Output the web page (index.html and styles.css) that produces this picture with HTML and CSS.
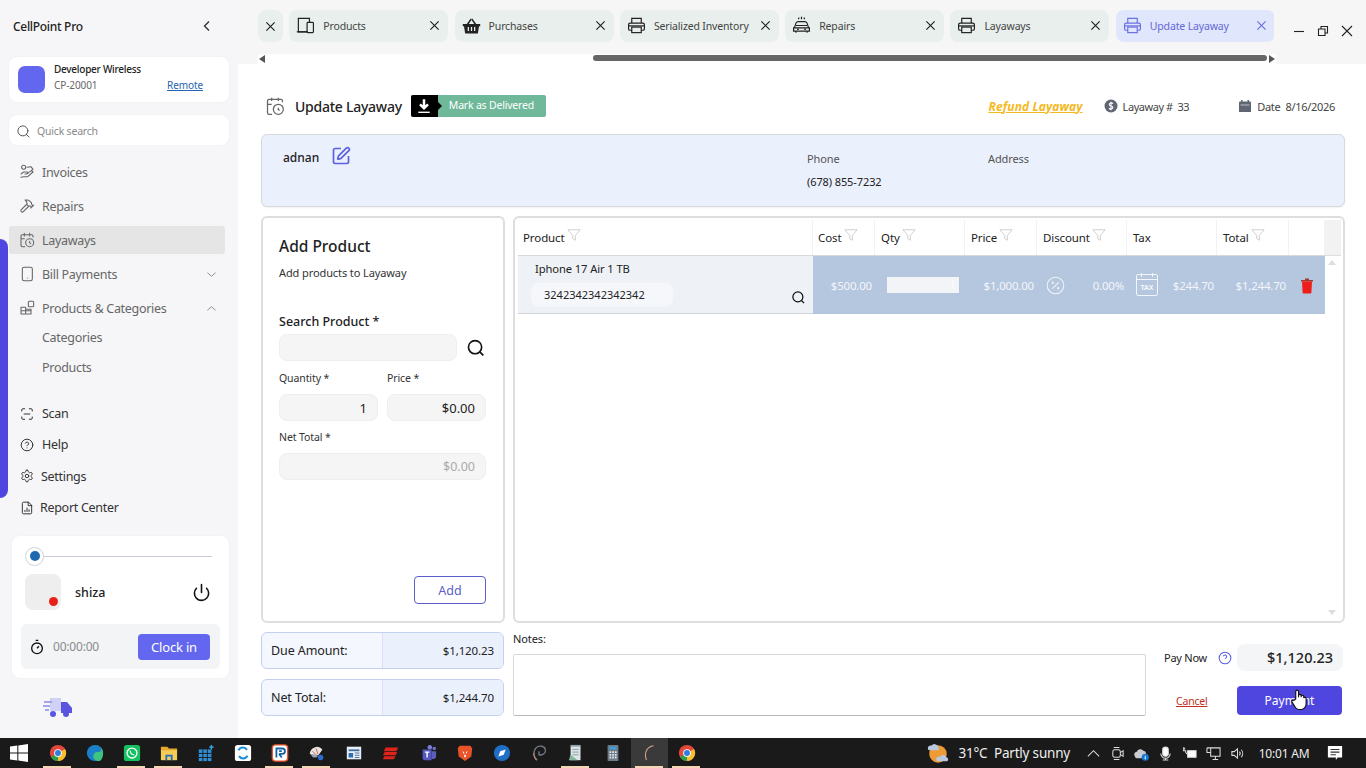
FILE: index.html
```html
<!DOCTYPE html>
<html lang="en">
<head>
  <meta charset="UTF-8">
  <meta name="viewport" content="width=device-width, initial-scale=1.0">
  <title>CellPoint Pro - Update Layaway</title>
  <link rel="stylesheet" href="styles.css">
</head>
<body>
  <!-- Shared icons -->
  <svg class="sprite" aria-hidden="true">
    <symbol id="i-search" viewBox="0 0 24 24"><circle cx="11" cy="11" r="8"/><path d="m21 21-4.3-4.3"/></symbol>
    <symbol id="i-cal-clock" viewBox="0 0 24 24"><path d="M21 7.5V6a2 2 0 0 0-2-2H5a2 2 0 0 0-2 2v14a2 2 0 0 0 2 2h3.5M16 2v4M8 2v4M3 10h5M17.5 17.5 16 16.3V14"/><circle cx="16" cy="16" r="6"/></symbol>
    <symbol id="i-printer" viewBox="0 0 24 24"><path d="M6 9V3h12v6M6 18H4a2 2 0 0 1-2-2v-5a2 2 0 0 1 2-2h16a2 2 0 0 1 2 2v5a2 2 0 0 1-2 2h-2"/><path d="M2 12.500h20"/><rect x="6" y="14" width="12" height="7"/></symbol>
    <symbol id="i-close" viewBox="0 0 12 12"><path d="M1.500 1.500l9 9M10.500 1.500l-9 9"/></symbol>
    <symbol id="i-filter" viewBox="0 0 16 16"><path d="M1 2h14L9.500 8.500V14l-3-2V8.500z"/></symbol>
    <symbol id="i-chev-down" viewBox="0 0 12 12"><path d="M1.500 4l4.500 4 4.500-4"/></symbol>
    <symbol id="i-chrome" viewBox="0 0 20 20"><circle cx="10" cy="10" r="9" fill="#e2483b"/><path d="M10 10 2.200 14.500A9 9 0 0 0 10 19z" fill="#2c9e4b"/><path d="M10 10v9a9 9 0 0 0 7.800-13.500z" fill="#f6c02c"/><circle cx="10" cy="10" r="4.300" fill="#fff"/><circle cx="10" cy="10" r="3.300" fill="#2f7de1"/></symbol>
  </svg>

  <div class="app">
    <aside class="sidebar">
      <div class="brand">
        <span class="brand-name">CellPoint Pro</span>
        <svg class="brand-back" viewBox="0 0 12 12"><path d="M8 1.500 3.500 6 8 10.500"/></svg>
      </div>

      <div class="org-card">
        <div class="org-logo"></div>
        <div class="org-info">
          <div class="org-name">Developer Wireless</div>
          <div class="org-meta"><span>CP-20001</span><a href="#">Remote</a></div>
        </div>
      </div>

      <div class="quick-search">
        <svg class="icon"><use href="#i-search"/></svg>
        <span>Quick search</span>
      </div>

      <nav class="nav">
        <a class="nav-item" href="#">
          <svg class="icon" viewBox="0 0 24 24"><circle cx="7" cy="5" r="3"/><path d="M3 15l4-3h5l2 1.500-3 1.500h-2M14 13l5-3 2 2-8 7H7l-4 1M12 5l6-1 3 4-3 2"/></svg>
          Invoices
        </a>
        <a class="nav-item" href="#">
          <svg class="icon" viewBox="0 0 24 24"><path d="m15 12-8.500 8.500c-.83.83-2.170.83-3 0a2.120 2.120 0 0 1 0-3L12 9M17.640 15 22 10.640M20.910 11.700l-1.250-1.250c-.6-.6-.93-1.400-.93-2.250v-.86L16.010 4.600a5.560 5.560 0 0 0-3.940-1.640H9l.92.82A6.180 6.180 0 0 1 12 8.400v1.560l2 2h2.470l2.260 1.910"/></svg>
          Repairs
        </a>
        <a class="nav-item active" href="#">
          <svg class="icon"><use href="#i-cal-clock"/></svg>
          Layaways
        </a>
        <a class="nav-item" href="#">
          <svg class="icon" viewBox="0 0 24 24"><rect x="5" y="2" width="15" height="20" rx="2.500"/><path d="M12.500 18h.01"/></svg>
          Bill Payments
          <svg class="nav-chev"><use href="#i-chev-down"/></svg>
        </a>
        <a class="nav-item" href="#">
          <svg class="icon" viewBox="0 0 24 24"><path d="M10 11H3v10h15v-7h-8zM10 11v10M3 16h15"/><rect x="14" y="2" width="8" height="8" rx="1.500"/></svg>
          Products &amp; Categories
          <svg class="nav-chev flip"><use href="#i-chev-down"/></svg>
        </a>
        <div class="subnav">
          <a href="#">Categories</a>
          <a href="#">Products</a>
        </div>
      </nav>

      <nav class="nav-tools">
        <a href="#">
          <svg class="icon" viewBox="0 0 24 24"><path d="M3 7V5a2 2 0 0 1 2-2h3M16 3h3a2 2 0 0 1 2 2v2M21 17v2a2 2 0 0 1-2 2h-3M8 21H5a2 2 0 0 1-2-2v-2M7 12h10"/></svg>
          <span class="t-scan">Scan</span>
        </a>
        <a href="#">
          <svg class="icon" viewBox="0 0 24 24"><circle cx="12" cy="12" r="10"/><path d="M9.090 9a3 3 0 0 1 5.830 1c0 2-3 3-3 3M12 17h.01"/></svg>
          <span class="t-scan">Help</span>
        </a>
        <a href="#">
          <svg class="icon" viewBox="0 0 24 24"><path d="M12.220 2h-.44a2 2 0 0 0-2 2v.18a2 2 0 0 1-1 1.730l-.43.25a2 2 0 0 1-2 0l-.15-.08a2 2 0 0 0-2.730.73l-.22.38a2 2 0 0 0 .73 2.730l.15.1a2 2 0 0 1 1 1.720v.51a2 2 0 0 1-1 1.740l-.15.09a2 2 0 0 0-.73 2.730l.22.38a2 2 0 0 0 2.730.73l.15-.08a2 2 0 0 1 2 0l.43.25a2 2 0 0 1 1 1.730V20a2 2 0 0 0 2 2h.44a2 2 0 0 0 2-2v-.18a2 2 0 0 1 1-1.730l.43-.25a2 2 0 0 1 2 0l.15.08a2 2 0 0 0 2.730-.73l.22-.39a2 2 0 0 0-.73-2.730l-.15-.08a2 2 0 0 1-1-1.740v-.5a2 2 0 0 1 1-1.740l.15-.09a2 2 0 0 0 .73-2.730l-.22-.38a2 2 0 0 0-2.730-.73l-.15.08a2 2 0 0 1-2 0l-.43-.25a2 2 0 0 1-1-1.730V4a2 2 0 0 0-2-2z"/><circle cx="12" cy="12" r="3"/></svg>
          <span>Settings</span>
        </a>
        <a href="#">
          <svg class="icon" viewBox="0 0 24 24"><path d="M14 2H6a2 2 0 0 0-2 2v16a2 2 0 0 0 2 2h12a2 2 0 0 0 2-2V8zM14 2v6h6M8.500 18v-2M12 18v-6M15.500 18v-3"/></svg>
          <span class="t-report">Report Center</span>
        </a>
      </nav>

      <div class="user-card">
        <div class="slider"><span class="slider-handle"></span><span class="slider-line"></span></div>
        <div class="user-row">
          <div class="avatar"><span class="avatar-dot"></span></div>
          <span class="user-name">shiza</span>
          <svg class="power" viewBox="0 0 24 24"><path d="M12 2v10M18.400 6.600a9 9 0 1 1-12.770.04"/></svg>
        </div>
        <div class="clock-strip">
          <svg class="timer" viewBox="0 0 24 24"><path d="M10 2h4M12 14l3-3"/><circle cx="12" cy="14" r="8"/></svg>
          <span class="clock-time">00:00:00</span>
          <button class="clock-btn">Clock in</button>
        </div>
      </div>

      <svg class="truck" viewBox="0 0 32 22">
        <path d="M8 2h11v13H8z" fill="#cfd1f7"/>
        <path d="M19 6h6l5 6v5H19z" fill="#5a55e0"/>
        <circle cx="11" cy="18" r="3" fill="#5a55e0"/>
        <circle cx="24" cy="18" r="3" fill="#5a55e0"/>
        <path d="M2 6h8M1 10h7M3 14h4" stroke="#8b88ea" stroke-width="1.500" fill="none"/>
      </svg>
    </aside>
    <div class="sidebar-rail"></div>

    <div class="main">
      <div class="topbar">
        <div class="tabs-row">
          <div class="tabs">
            <div class="tab tab-cut"><svg class="tab-x"><use href="#i-close"/></svg></div>
            <div class="tab">
              <svg class="tab-icon" viewBox="0 0 24 24"><path d="M15 20H3V3h14v5"/><path d="M1 20h13"/><rect x="14" y="8" width="8" height="13" rx="1"/></svg>
              <span class="tab-label">Products</span>
              <svg class="tab-x"><use href="#i-close"/></svg>
            </div>
            <div class="tab">
              <svg class="tab-icon solid" viewBox="0 0 24 24"><path d="M1 10h22v3h-1.500L20 22H4L2.500 13H1z"/><path d="M6 10l5-7 1.500 1-4 6zM18 10l-5-7-1.500 1 4 6z"/><path d="M8 14v5M12 14v5M16 14v5" stroke="#e8efec" stroke-width="1.600"/></svg>
              <span class="tab-label">Purchases</span>
              <svg class="tab-x"><use href="#i-close"/></svg>
            </div>
            <div class="tab">
              <svg class="tab-icon"><use href="#i-printer"/></svg>
              <span class="tab-label">Serialized Inventory</span>
              <svg class="tab-x"><use href="#i-close"/></svg>
            </div>
            <div class="tab">
              <svg class="tab-icon" viewBox="0 0 24 24"><path d="M3 15l2-6c.5-1.500 1.500-2 3-2h8c1.500 0 2.500.5 3 2l2 6M2 15h20v4H2zM5 19v2M19 19v2M5 12h14M8 4l1-2M12 4V1M16 4l-1-2M6.500 17h2M15.500 17h2"/></svg>
              <span class="tab-label">Repairs</span>
              <svg class="tab-x"><use href="#i-close"/></svg>
            </div>
            <div class="tab">
              <svg class="tab-icon"><use href="#i-printer"/></svg>
              <span class="tab-label">Layaways</span>
              <svg class="tab-x"><use href="#i-close"/></svg>
            </div>
            <div class="tab active">
              <svg class="tab-icon"><use href="#i-printer"/></svg>
              <span class="tab-label">Update Layaway</span>
              <svg class="tab-x"><use href="#i-close"/></svg>
            </div>
          </div>
          <div class="win-controls">
            <svg viewBox="0 0 12 12"><path d="M1 6.500h10"/></svg>
            <svg viewBox="0 0 12 12"><path d="M1.500 4h6.500v6.500H1.500zM4 4V1.500h6.500V8H8"/></svg>
            <svg viewBox="0 0 12 12"><path d="M1 1l10 10M11 1 1 11"/></svg>
          </div>
        </div>
        <div class="hscroll">
          <span class="arrow-left"></span>
          <span class="hscroll-track"><span class="hscroll-thumb"></span></span>
          <span class="arrow-right"></span>
        </div>
      </div>

      <main class="content">
        <div class="page-head">
          <svg class="page-icon"><use href="#i-cal-clock"/></svg>
          <h1>Update Layaway</h1>
          <button class="deliver-btn">
            <span class="deliver-icon">
              <svg viewBox="0 0 14 14"><path d="M7 1v7.500M3.500 5.500 7 9l3.500-3.500" stroke="#fff" stroke-width="2.200" fill="none"/><path d="M2 12.500h10" stroke="#fff" stroke-width="1.200"/></svg>
            </span>
            <span class="deliver-text">Mark as Delivered</span>
          </button>
          <a class="refund" href="#">Refund Layaway</a>
          <span class="head-meta meta-no">
            <svg viewBox="0 0 14 14"><circle cx="7" cy="7" r="6.500" fill="#5f6672"/><path d="M9 4.800C8.500 4 6.900 3.800 6 4.300c-1 .6-.9 2 .2 2.400l1.700.6c1.200.5 1.200 1.900.1 2.400-1 .5-2.500.2-3-.6M7 2.800v8.400" stroke="#fff" stroke-width="1.100" fill="none"/></svg>
            Layaway #&nbsp; 33
          </span>
          <span class="head-meta meta-date">
            <svg viewBox="0 0 14 14"><path d="M1 3.500a1 1 0 0 1 1-1h1V1h1.500v1.500h5V1H11v1.500h1a1 1 0 0 1 1 1V13H1z" fill="#5f6672"/><path d="M2.500 5.500h9v1h-9z" fill="#fff" opacity=".6"/></svg>
            Date&nbsp; 8/16/2026
          </span>
        </div>

        <section class="customer">
          <div class="cust-name">
            <span>adnan</span>
            <svg class="cust-edit" viewBox="0 0 24 24"><path d="M12 3H5a2 2 0 0 0-2 2v14a2 2 0 0 0 2 2h14a2 2 0 0 0 2-2v-7"/><path d="M18.375 2.625a1 1 0 0 1 3 3l-9.013 9.014a2 2 0 0 1-.853.505l-2.873.84a.5.5 0 0 1-.62-.62l.84-2.873a2 2 0 0 1 .506-.852z"/></svg>
          </div>
          <div class="cust-col phone">
            <div class="cust-label">Phone</div>
            <div class="cust-value">(678) 855-7232</div>
          </div>
          <div class="cust-col">
            <div class="cust-label">Address</div>
          </div>
        </section>

        <div class="work-row">
          <section class="panel add-panel">
            <h2>Add Product</h2>
            <p class="add-sub">Add products to Layaway</p>
            <label class="search-label">Search Product *</label>
            <div class="search-row">
              <div class="field search-field"></div>
              <svg class="search-go"><use href="#i-search"/></svg>
            </div>
            <div class="field-pair">
              <div>
                <label class="small-label">Quantity *</label>
                <div class="field">1</div>
              </div>
              <div>
                <label class="small-label">Price *</label>
                <div class="field">$0.00</div>
              </div>
            </div>
            <label class="small-label net">Net Total *</label>
            <div class="field muted">$0.00</div>
            <div class="add-actions"><button class="add-btn">Add</button></div>
          </section>

          <section class="panel table-panel">
            <div class="table-wrap">
              <div class="thead">
                <div class="th">Product<svg class="filter"><use href="#i-filter"/></svg></div>
                <div class="th">Cost<svg class="filter"><use href="#i-filter"/></svg></div>
                <div class="th">Qty<svg class="filter"><use href="#i-filter"/></svg></div>
                <div class="th">Price<svg class="filter"><use href="#i-filter"/></svg></div>
                <div class="th">Discount<svg class="filter"><use href="#i-filter"/></svg></div>
                <div class="th">Tax</div>
                <div class="th">Total<svg class="filter"><use href="#i-filter"/></svg></div>
                <div class="th"></div>
              </div>
              <div class="tr">
                <div class="td-product">
                  <div class="prod-name">Iphone 17 Air 1 TB</div>
                  <div class="prod-serial">3242342342342342</div>
                  <svg class="prod-search"><use href="#i-search"/></svg>
                </div>
                <div class="td num">$500.00</div>
                <div class="td"><div class="qty-input">1</div></div>
                <div class="td num">$1,000.00</div>
                <div class="td disc">
                  <svg class="disc-icon" viewBox="0 0 24 24"><circle cx="12" cy="12" r="10.500"/><path d="M16 8l-8 8"/><circle cx="8.500" cy="8.500" r=".8"/><circle cx="15.500" cy="15.500" r=".8"/></svg>
                  <span>0.00%</span>
                </div>
                <div class="td disc">
                  <span class="tax-icon">TAX</span>
                  <span>$244.70</span>
                </div>
                <div class="td num">$1,244.70</div>
                <div class="td">
                  <svg class="trash" viewBox="0 0 14 16"><path d="M1 2.500h12V4H1z" fill="#a33a2c"/><path d="M5 1h4v1.500H5z" fill="#a33a2c"/><path d="M2 4h10l-.6 11a1 1 0 0 1-1 1H3.600a1 1 0 0 1-1-1z" fill="#ee1f1a"/></svg>
                </div>
              </div>
            </div>
            <div class="vscroll">
              <span class="vscroll-head"></span>
              <span class="v-up"></span>
              <span class="v-down"></span>
            </div>
          </section>
        </div>

        <div class="bottom-row">
          <div class="totals">
            <div class="total-box"><span class="total-label">Due Amount:</span><span class="total-value">$1,120.23</span></div>
            <div class="total-box"><span class="total-label">Net Total:</span><span class="total-value">$1,244.70</span></div>
          </div>
          <div class="notes">
            <label>Notes:</label>
            <div class="notes-box"></div>
          </div>
          <div class="pay">
            <div class="pay-row">
              <span class="pay-label">Pay Now</span>
              <svg class="pay-help" viewBox="0 0 24 24"><circle cx="12" cy="12" r="10"/><path d="M9.090 9a3 3 0 0 1 5.830 1c0 2-3 3-3 3M12 17h.01"/></svg>
              <div class="pay-field">$1,120.23</div>
            </div>
            <div class="pay-actions">
              <a class="cancel" href="#">Cancel</a>
              <button class="pay-btn">Payment</button>
            </div>
          </div>
        </div>
      </main>
    </div>
  </div>

  <!-- Mouse pointer caught in the capture -->
  <svg class="cursor" viewBox="0 0 18 24"><path d="M5 11V3a1.500 1.500 0 0 1 3 0v6-1.500a1.400 1.400 0 0 1 2.800 0V9v-1a1.400 1.400 0 0 1 2.700 0v2a1.300 1.300 0 0 1 2.500 0v6c0 3-2 6-5 6H8c-2 0-3-1-4-3l-3-5c-.8-1.500 1-2.500 2-1.500z" fill="#fff" stroke="#111" stroke-width="1.200"/></svg>

  <footer class="taskbar">
    <div class="tb-item start">
      <svg viewBox="0 0 16 16"><path d="M0 2.300 6.500 1.400v6.200H0zM7.400 1.300 16 0v7.600H7.400zM0 8.500h6.500v6.200L0 13.800zM7.400 8.500H16V16l-8.600-1.300z" fill="#fff"/></svg>
    </div>
    <div class="tb-item run"><svg viewBox="0 0 20 20"><use href="#i-chrome"/></svg></div>
    <div class="tb-item">
      <svg viewBox="0 0 20 20"><circle cx="10" cy="10" r="9" fill="#1c7fc9"/><path d="M19 10c0-5-4-9-9-9 4 0 7 2 7 5 0 2-2 3-4 3-3 0-5 2-5 5 0 3 3 5 6 5 3 0 5-4 5-9z" fill="#3fc47f"/></svg>
    </div>
    <div class="tb-item run">
      <svg viewBox="0 0 20 20"><rect x="1" y="1" width="18" height="18" rx="3" fill="#13c25e"/><circle cx="10" cy="10" r="5.500" fill="none" stroke="#fff" stroke-width="1.500"/><path d="M8 7.500c0 2.500 2 4.500 4.500 4.500" fill="none" stroke="#fff" stroke-width="1.500"/></svg>
    </div>
    <div class="tb-item run">
      <svg viewBox="0 0 20 20"><path d="M1 3h7l2 2h9v3H1z" fill="#e8a92c"/><path d="M1 7h18v11H1z" fill="#f6cc58"/><path d="M6 12h8v6h-2v-4H8v4H6z" fill="#1a6fc0"/></svg>
    </div>
    <div class="tb-item">
      <svg viewBox="0 0 20 20"><path d="M2 6h14v13H2z" fill="#2e8fd6"/><path d="M6.500 6v13M11.500 6v13M2 10.500h14M2 15h14" stroke="#1a1a1a" stroke-width="1"/><path d="M16 1v5M13.500 3.500h5" stroke="#3aa8ee" stroke-width="1.600"/></svg>
    </div>
    <div class="tb-item">
      <svg viewBox="0 0 20 20"><rect x="1" y="1" width="18" height="18" rx="3" fill="#fff"/><path d="M14.500 6.500A5.500 5.500 0 0 0 5 7M5.500 13.500A5.500 5.500 0 0 0 15 13" fill="none" stroke="#1a8ed8" stroke-width="2.200"/></svg>
    </div>
    <div class="tb-item run">
      <svg viewBox="0 0 20 20"><rect x="1.500" y="1" width="17" height="18" rx="3.500" fill="#fff" stroke="#e4572e" stroke-width="1.500"/><path d="M6 15V5h6.500a2.500 2.500 0 0 1 0 6H9M9 11l3 4M9 8h3" fill="none" stroke="#1464a8" stroke-width="2"/></svg>
    </div>
    <div class="tb-item run">
      <svg viewBox="0 0 20 20"><path d="M2 11a8 8 0 0 1 14-5l-4 6-4 1z" fill="#e9e4df"/><path d="M5 8l4 4M9 5l2 6" stroke="#c25a4a" stroke-width="1"/><path d="M3 11c1 4 5 5 8 3l-1-2z" fill="#9aa3ad"/><circle cx="14" cy="15" r="3" fill="#2a6fd0"/></svg>
    </div>
    <div class="tb-item">
      <svg viewBox="0 0 20 20"><rect x="2" y="3" width="16" height="14" fill="#e9edf2"/><path d="M4 7h12" stroke="#3b6ea5" stroke-width="2"/><path d="M4 10h5v5H4z" fill="#2a6fb5"/><path d="M11 10h5M11 12.500h5M11 15h5" stroke="#3b6ea5"/></svg>
    </div>
    <div class="tb-item">
      <svg viewBox="0 0 20 20"><path d="M4 4h14l-2 4H2zM3 9h14l-2 3.500H1zM2.500 13.500H15L13 17H1z" fill="#e0241c"/></svg>
    </div>
    <div class="tb-item">
      <svg viewBox="0 0 20 20"><circle cx="12" cy="3.500" r="2.500" fill="#7a7fd8"/><circle cx="17" cy="5" r="2" fill="#6a6fc8"/><path d="M14 8h5v6a3 3 0 0 1-5 2z" fill="#5a5fb8"/><path d="M4 6h10v12H7a3 3 0 0 1-3-3z" fill="#5558c0"/><path d="M6.500 9h5M9 9v6" stroke="#fff" stroke-width="1.600"/></svg>
    </div>
    <div class="tb-item">
      <svg viewBox="0 0 20 20"><path d="M4 2h12l2 3-1 9-7 5-7-5-1-9z" fill="#e8532a"/><path d="M7 8l2 1v5l1 1 1-1V9l2-1-3 5z" fill="#fff"/></svg>
    </div>
    <div class="tb-item">
      <svg viewBox="0 0 20 20"><circle cx="10" cy="10" r="9" fill="#1f6fc7"/><path d="M6 14l2-6 6-2-2 6z" fill="#fff"/></svg>
    </div>
    <div class="tb-item">
      <svg viewBox="0 0 20 20"><path d="M8 18C4 15 3 8 7 4c3-3 9-2 10 2s-3 7-7 6V8" fill="none" stroke="#76808c" stroke-width="1.400"/><path d="M4 10c0 3 1 6 3 8" fill="none" stroke="#d08a6a" stroke-width="1"/></svg>
    </div>
    <div class="tb-item run">
      <svg viewBox="0 0 20 20"><path d="M4 2h11v16H4z" fill="#dfe6e6"/><path d="M6 6h7M6 9h7M6 12h7" stroke="#7d95a8"/><path d="M4 1h11v2H4z" fill="#8fa0ab"/><path d="M4 12l-2 6h10z" fill="#87b79a"/></svg>
    </div>
    <div class="tb-item">
      <svg viewBox="0 0 20 20"><rect x="4" y="1" width="12" height="18" rx="1" fill="#6c7a86"/><rect x="6" y="3" width="8" height="3" fill="#3ea0dd"/><path d="M6 8h2v2H6zM9 8h2v2H9zM12 8h2v2h-2zM6 11h2v2H6zM9 11h2v2H9zM12 11h2v2h-2zM6 14h2v2H6zM9 14h2v2H9zM12 14h2v2h-2z" fill="#dbe2e8"/></svg>
    </div>
    <div class="tb-item run current">
      <svg viewBox="0 0 20 20"><path d="M14 2C7 3 3 9 6 18" fill="none" stroke="#d9a58c" stroke-width="1.200"/><path d="M16 16h.1M13 17h.1" stroke="#6d8fc0" stroke-width="1.400"/></svg>
    </div>
    <div class="tb-item run"><svg viewBox="0 0 20 20"><use href="#i-chrome"/></svg></div>

    <div class="tray">
      <div class="weather">
        <svg viewBox="0 0 26 24"><circle cx="13" cy="13" r="9.500" fill="#ef9b35"/><path d="M2 7a3 3 0 0 1 4-3 4 4 0 0 1 7 1 2.500 2.500 0 0 1 0 4H4a2 2 0 0 1-2-2z" fill="#b9c8dc"/><path d="M11 19a3 3 0 0 1 4-3 4 4 0 0 1 7 .5 2.500 2.500 0 0 1 1 4.500H13a2 2 0 0 1-2-2z" fill="#b9c8dc"/></svg>
        <span>31°C&nbsp; Partly sunny</span>
      </div>
      <span class="tray-icon"><svg viewBox="0 0 16 16"><path d="M2 11l6-6 6 6"/></svg></span>
      <span class="tray-icon"><svg viewBox="0 0 16 16"><rect x="3" y="4" width="8" height="8" rx="2"/><path d="M11 7l3-2v6l-3-2M4 1.500h6M4 14.500h6"/></svg></span>
      <span class="tray-icon"><svg viewBox="0 0 16 16"><path d="M1 11a3 3 0 0 1 2-5 4 4 0 0 1 7-1 3.500 3.500 0 0 1 3 3l-4 5H3a2 2 0 0 1-2-2z" fill="#c8ccd2" stroke="none"/><circle cx="12" cy="12" r="3.800" fill="#1477d4" stroke="none"/><path d="M12 11v3M12 9.800v.2" stroke="#fff" stroke-width="1.100"/></svg></span>
      <span class="tray-icon"><svg viewBox="0 0 16 16"><rect x="5" y="1" width="6" height="10" rx="3" fill="#fff"/><path d="M3 8a5 5 0 0 0 10 0M8 13v2M5 15h6"/></svg></span>
      <span class="tray-icon"><svg viewBox="0 0 16 16"><rect x="6" y="5" width="9" height="7" fill="#fff"/><path d="M1 3h2.500M2 1v4M1 5h3v2l2 2"/></svg></span>
      <span class="tray-icon"><svg viewBox="0 0 16 16"><path d="M5 2h10v9H5zM1 2h4M1 2v5h4M10 11v3M7 14.500h6"/></svg></span>
      <span class="tray-icon"><svg viewBox="0 0 16 16"><path d="M2 6v4h2.500L8 13V3L4.500 6zM10 6a3 3 0 0 1 0 4M12 4a6 6 0 0 1 0 8"/></svg></span>
      <span class="tray-clock">10:01 AM</span>
      <span class="tray-note"><svg viewBox="0 0 18 18"><path d="M1 1h16v13h-5l-2 3v-3H1z" fill="#fff"/><path d="M4 5h10M4 8h10M4 11h6" stroke="#333" stroke-width="1.200"/></svg></span>
    </div>
  </footer>
</body>
</html>
```

FILE: styles.css
```css
/* Reset & base */
* { margin: 0; padding: 0; box-sizing: border-box; }
html, body { height: 768px; overflow: hidden; }
body { font-family: "Noto Sans", "Open Sans", Arial, sans-serif; background: #fff; color: #222; font-size: 12px; position: relative; }
a { text-decoration: none; color: inherit; }
button { font-family: inherit; border: none; cursor: pointer; }
.sprite { position: absolute; width: 0; height: 0; }
.icon { width: 16px; height: 16px; fill: none; stroke: #666; stroke-width: 1.600; stroke-linecap: round; stroke-linejoin: round; flex: none; }

.app { display: flex; height: 738px; }

/* Sidebar */
.sidebar { width: 238px; flex: none; background: #f6f6f8; padding: 0 9px; display: flex; flex-direction: column; position: relative; }
.brand { height: 57px; padding: 0 16px 5px 4px; display: flex; align-items: center; justify-content: space-between; }
.brand-name { font-size: 12px; font-weight: 500; color: #222; letter-spacing: -0.3px; }
.brand-back { width: 12px; height: 12px; fill: none; stroke: #333; stroke-width: 1.400; }

.org-card { height: 45px; width: 220px; background: #fff; border-radius: 8px; display: flex; align-items: center; padding: 0 26px 0 9px; gap: 9px; box-shadow: 0 0 2px rgba(0,0,0,0.06); }
.org-logo { width: 27px; height: 27px; border-radius: 7px; background: #6366ee; flex: none; }
.org-info { flex: 1; margin-bottom: 3px; }
.org-name { font-size: 10px; font-weight: 500; color: #222; line-height: 15px; letter-spacing: -0.25px; }
.org-meta { display: flex; justify-content: space-between; font-size: 10px; color: #666; line-height: 17px; letter-spacing: -0.1px; }
.org-meta a { color: #2364b0; text-decoration: underline; font-size: 10px; }

.quick-search { width: 220px; height: 30px; margin-top: 13px; padding: 2px 0 0 7px; background: #fff; border-radius: 8px; display: flex; align-items: center; gap: 6px; color: #8a8a8a; font-size: 10.500px; letter-spacing: -0.2px; box-shadow: 0 0 2px rgba(0,0,0,0.06); }
.quick-search .icon { width: 15px; height: 15px; stroke: #555; }

.nav { margin-top: 7px; }
.nav-item { height: 28px; margin: 6px 0; width: 216px; border-radius: 3px; display: flex; align-items: center; gap: 7px; padding-left: 10px; font-size: 12.500px; color: #666; letter-spacing: -0.3px; }
.nav-item.active { background: #e5e5e5; }
.nav-chev { width: 11px; height: 11px; margin-left: auto; margin-right: 8px; fill: none; stroke: #888; stroke-width: 1; }
.nav-chev.flip { transform: rotate(180deg); }
.subnav { margin-top: -6px; }
.subnav a { display: flex; align-items: center; height: 30px; padding-left: 33px; font-size: 12.500px; color: #666; letter-spacing: -0.3px; }

.nav-tools { margin-top: 16px; }
.nav-tools a { height: 31.300px; display: flex; align-items: center; gap: 7px; padding-left: 11px; font-size: 12.500px; color: #333; letter-spacing: -0.3px; }
.nav-tools .icon { width: 14px; height: 14px; stroke: #333; stroke-width: 1.700; }
.nav-tools .t-scan { margin-left: 1px; }
.nav-tools .t-report { margin-left: -1px; }

.user-card { width: 217px; height: 142px; margin: 13px 0 0 3px; background: #fff; border-radius: 8px; padding: 10px 9px 0; box-shadow: 0 0 2px rgba(0,0,0,0.05); }
.slider { display: flex; align-items: center; height: 20px; padding-left: 4px; }
.slider-handle { width: 19px; height: 19px; border-radius: 50%; background: #fff; border: 1px solid #cdd2dc; display: flex; align-items: center; justify-content: center; flex: none; }
.slider-handle::before { content: ""; width: 10px; height: 10px; border-radius: 50%; background: #1e6ab0; }
.slider-line { width: 168px; height: 1px; background: #c9ccd6; }
.user-row { display: flex; align-items: center; height: 36px; margin-top: 8px; padding-left: 4px; }
.avatar { width: 36px; height: 36px; border-radius: 8px; background: #eeeeee; position: relative; flex: none; }
.avatar-dot { position: absolute; right: 3px; bottom: 4px; width: 9px; height: 9px; border-radius: 50%; background: #e8201a; }
.user-name { margin-left: 14px; font-size: 12.500px; font-weight: 500; color: #222; }
.power { width: 19px; height: 19px; margin-left: auto; margin-right: 9px; fill: none; stroke: #111; stroke-width: 2; stroke-linecap: round; }
.clock-strip { width: 199px; height: 45px; margin-top: 14px; background: #f3f4f6; border-radius: 6px; display: flex; align-items: center; padding: 0 10px 0 8px; }
.timer { width: 16px; height: 16px; fill: none; stroke: #111; stroke-width: 2; flex: none; }
.clock-time { margin-left: 8px; color: #8a8a8a; font-size: 12px; letter-spacing: -0.2px; }
.clock-btn { margin-left: auto; width: 72px; height: 26px; background: #6366ee; color: #fff; border-radius: 4px; font-size: 13px; letter-spacing: -0.2px; }
.truck { width: 32px; height: 22px; margin: 18px 0 0 33px; }

/* Blue strip over the sidebar's left edge */
.sidebar-rail { position: absolute; left: 0; top: 239px; width: 8px; height: 259px; background: #4f46e0; border-radius: 0 8px 8px 0; }

/* Top bar */
.main { flex: 1; min-width: 0; background: #fff; }
.topbar { height: 64px; background: #f6f6f6; padding: 10px 0 0 20px; }
.tabs-row { display: flex; height: 44px; }
.tabs { display: flex; gap: 6.300px; height: 32px; width: 1016px; overflow: hidden; flex: none; }
.tab { width: 159px; flex: none; height: 32px; background: #e8efec; border-radius: 8px; display: flex; align-items: center; padding: 0 8px 1px 7px; color: #444; font-size: 10.500px; letter-spacing: -0.15px; }
.tab-cut { width: 25px; padding: 0; justify-content: center; }
.tab-icon { width: 19px; height: 19px; flex: none; fill: none; stroke: #222; stroke-width: 1.500; }
.tab-icon.solid { fill: #222; stroke: none; }
.tab-label { margin-left: 8px; flex: 1; white-space: nowrap; }
.tab-x { width: 11px; height: 11px; flex: none; fill: none; stroke: #222; stroke-width: 1.300; }
.tab.active { background: #e0e6fb; color: #6468d8; }
.tab.active .tab-icon { stroke: #6a70e0; }
.tab.active .tab-x { stroke: #6a70e0; }
.win-controls { display: flex; gap: 12px; margin: 15px 0 0 19px; height: 12px; }
.win-controls svg { width: 12px; height: 12px; fill: none; stroke: #222; stroke-width: 1.100; }

.hscroll { width: 1018px; height: 10px; background: #fff; display: flex; align-items: flex-start; padding-top: 1px; }
.arrow-left { width: 0; height: 0; margin: 0 0 0 1px; border: 4px solid transparent; border-left: 0; border-right: 6px solid #555; flex: none; }
.hscroll-track { flex: 1; min-width: 0; height: 6px; display: block; margin-left: 4px; }
.hscroll-thumb { display: block; width: 674px; height: 6px; margin-left: 324px; background: #666; border-radius: 3px; }
.arrow-right { width: 0; height: 0; border: 4px solid transparent; border-right: 0; border-left: 6px solid #555; flex: none; margin-right: 1px; }

/* Content */
.content { padding: 0 21px 0 23px; }
.page-head { height: 70px; display: flex; align-items: center; padding: 14px 10px 0 5px; }
.page-icon { width: 20px; height: 20px; fill: none; stroke: #666; stroke-width: 1.500; flex: none; margin-left: -1px; }
.page-head h1 { margin-left: 10px; font-size: 14px; font-weight: 500; color: #222; letter-spacing: -0.25px; white-space: nowrap; }
.deliver-btn { margin-left: 9px; display: flex; height: 22px; width: 135px; background: #6fb89a; border-radius: 2px; color: #fff; font-size: 10.500px; align-items: center; letter-spacing: -0.2px; flex: none; }
.deliver-icon { width: 27px; height: 22px; background: #000; border-radius: 2px 0 0 2px; display: flex; align-items: center; justify-content: center; position: relative; flex: none; }
.deliver-icon::after { content: ""; position: absolute; right: -4px; top: 7px; border: 4px solid transparent; border-left-color: #000; border-right: 0; }
.deliver-icon svg { width: 16px; height: 16px; }
.deliver-text { margin-left: 11px; margin-top: -3px; white-space: nowrap; }
.refund { margin-left: auto; color: #f4b91e; font-weight: 700; font-style: italic; font-size: 12px; text-decoration: underline; letter-spacing: 0.1px; }
.head-meta { display: flex; align-items: center; gap: 5px; font-size: 11px; color: #444; letter-spacing: -0.3px; white-space: nowrap; }
.head-meta svg { width: 14px; height: 14px; flex: none; }
.meta-no { margin-left: 21px; letter-spacing: -0.45px; }
.meta-date { margin-left: 49px; }

.customer { height: 73px; background: #ebf0fd; border: 1px solid #d6d9de; border-radius: 6px; display: flex; box-shadow: 0 1px 2px rgba(0,0,0,0.06); }
.cust-name { width: 545px; padding: 14px 0 0 21px; display: flex; align-items: flex-start; gap: 12px; font-size: 12px; font-weight: 500; color: #222; }
.cust-edit { width: 20px; height: 20px; margin-top: -3px; fill: none; stroke: #5d60e0; stroke-width: 2; }
.cust-col { padding-top: 16px; font-size: 11px; letter-spacing: -0.1px; }
.cust-col.phone { width: 181px; }
.cust-label { color: #555; line-height: 16px; }
.cust-value { color: #222; margin-top: 7px; line-height: 16px; }

.work-row { display: flex; gap: 8px; margin-top: 9px; height: 407px; }
.panel { background: #fff; border: 2px solid #dedede; border-radius: 6px; }

/* Add product panel */
.add-panel { width: 244px; flex: none; padding: 18px 17px 0 16px; display: flex; flex-direction: column; }
.add-panel h2 { font-size: 15.500px; font-weight: 500; color: #222; line-height: 20px; }
.add-sub { font-size: 11px; color: #333; margin-top: 9px; line-height: 16px; letter-spacing: -0.1px; }
.search-label { display: block; margin-top: 32px; font-size: 12.500px; font-weight: 500; color: #222; line-height: 18px; }
.search-row { display: flex; align-items: center; gap: 9px; margin-top: 3px; }
.field { height: 27px; background: #f5f5f5; border: 1px solid #eeeeee; border-radius: 8px; display: flex; align-items: center; justify-content: flex-end; padding-right: 10px; font-size: 13px; color: #222; }
.search-field { width: 180px; }
.search-go { width: 20px; height: 20px; fill: none; stroke: #111; stroke-width: 2; }
.field-pair { display: flex; gap: 9px; margin-top: 9px; }
.field-pair > div { width: 99px; }
.small-label { display: block; font-size: 10.500px; color: #333; line-height: 16px; margin-bottom: 8px; letter-spacing: -0.1px; }
.small-label.net { margin-top: 8px; }
.field.muted { color: #aaa; font-size: 12.500px; }
.add-actions { display: flex; justify-content: flex-end; margin-top: 96px; }
.add-btn { width: 72px; height: 28px; background: #fff; border: 1px solid #5b5fc7; border-radius: 4px; color: #5b5fc7; font-size: 12.500px; }

/* Line items */
.table-panel { flex: 1; display: flex; padding: 2px 2px 2px 3px; }
.table-wrap { width: 807px; flex: none; }
.thead, .tr { display: grid; grid-template-columns: 295px 62px 90px 72px 90px 90px 72px 36px; }
.thead { height: 36px; border-bottom: 1px solid #d8d8d8; }
.th { display: flex; align-items: center; padding-left: 5px; font-size: 11.500px; color: #222; border-right: 1px solid #f2f2f2; letter-spacing: -0.1px; }
.th + .th + .th { padding-left: 6px; }
.filter { width: 14px; height: 14px; margin: -5px 0 0 2px; fill: #fff; stroke: #c8c8c8; stroke-width: 1; }
.tr { height: 58px; background: #b5c6df; }
.td-product { background: #eef1f6; position: relative; padding: 4px 0 0 17px; border-bottom: 1px solid #d0d3d8; }
.prod-name { font-size: 11.200px; color: #222; line-height: 17px; letter-spacing: -0.1px; }
.prod-serial { width: 142px; height: 24px; margin: 6px 0 0 -4px; padding-left: 13px; background: #f5f7fb; border-radius: 8px; font-size: 11px; line-height: 24px; color: #222; }
.prod-search { position: absolute; right: 7px; bottom: 8px; width: 15px; height: 15px; fill: none; stroke: #111; stroke-width: 2; }
.td { display: flex; align-items: center; justify-content: flex-end; padding-right: 3px; color: #f2f5fa; font-size: 11.500px; letter-spacing: -0.2px; }
.td.disc { justify-content: space-between; padding-left: 9px; }
.qty-input { width: 72px; height: 16px; margin-right: 3px; background: #f2f4f8; color: #fff; text-align: right; line-height: 16px; padding-right: 3px; }
.disc-icon { width: 19px; height: 19px; fill: none; stroke: #f2f5fa; stroke-width: 1.300; }
.tax-icon { width: 22px; height: 22px; border: 1px solid #f2f5fa; border-radius: 2px; font-size: 7px; font-weight: 700; text-align: center; line-height: 26px; color: #f2f5fa; letter-spacing: 0; position: relative; }
.tax-icon::before { content: ""; position: absolute; left: 0; right: 0; top: 4px; height: 1px; background: #f2f5fa; }
.tax-icon::after { content: ""; position: absolute; left: 4px; top: -2px; width: 1px; height: 4px; background: #f2f5fa; box-shadow: 11px 0 0 #f2f5fa; }
.trash { width: 14px; height: 17px; margin-right: 8px; }

.vscroll { flex: 1; position: relative; }
.vscroll-head { display: block; height: 36px; background: #f2f2f2; border-bottom: 1px solid #dedede; }
.v-up, .v-down { position: absolute; left: 3px; width: 0; height: 0; border: 4px solid transparent; }
.v-up { top: 40px; border-top: 0; border-bottom: 5px solid #ddd; }
.v-down { bottom: 4px; border-bottom: 0; border-top: 5px solid #ddd; }

/* Bottom row */
.bottom-row { display: flex; margin-top: 9px; gap: 9px; }
.totals { width: 243px; flex: none; display: flex; flex-direction: column; gap: 10px; }
.total-box { height: 37px; display: flex; border: 1px solid #c3d1ef; border-radius: 6px; overflow: hidden; background: #f4f7fe; align-items: stretch; }
.total-label { width: 121px; border-right: 1px solid #d8e1f5; display: flex; align-items: center; padding-left: 9px; font-size: 12.500px; color: #222; letter-spacing: -0.1px; }
.total-value { flex: 1; background: #ebf0fd; display: flex; align-items: center; justify-content: flex-end; padding-right: 9px; font-size: 11.500px; color: #222; letter-spacing: -0.1px; }
.notes { width: 633px; flex: none; }
.notes label { display: block; font-size: 11px; line-height: 13px; color: #222; letter-spacing: -0.1px; }
.notes-box { height: 62px; margin-top: 9px; border: 1px solid #d8d8d8; border-bottom-color: #bbb; border-radius: 2px; background: #fff; }
.pay { flex: 1; padding: 12px 0 0 9px; }
.pay-row { display: flex; align-items: center; height: 27px; }
.pay-label { font-size: 11px; color: #222; letter-spacing: -0.25px; white-space: nowrap; }
.pay-help { width: 14px; height: 14px; margin-left: 11px; fill: none; stroke: #5b5fe0; stroke-width: 1.800; flex: none; }
.pay-field { width: 106px; height: 27px; margin-left: 5px; flex: none; background: #f4f5f7; border-radius: 8px; text-align: right; padding-right: 10px; line-height: 27px; font-size: 14.500px; font-weight: 500; color: #222; }
.pay-actions { display: flex; align-items: center; margin-top: 15px; padding-left: 12px; }
.cancel { width: 31px; color: #c0321e; text-decoration: underline; font-size: 10.500px; letter-spacing: -0.2px; }
.pay-btn { margin-left: 30px; width: 105px; height: 29px; background: #4f46e0; color: #fff; border-radius: 4px; font-size: 12px; flex: none; }

.cursor { position: absolute; left: 1291px; top: 688px; width: 17px; height: 24px; }

/* Windows taskbar */
.taskbar { height: 30px; background: #1a1a1a; display: flex; align-items: center; color: #fff; }
.tb-item { width: 37px; height: 30px; flex: none; display: flex; align-items: center; justify-content: center; position: relative; }
.tb-item svg { width: 18px; height: 18px; }
.tb-item.start { margin-right: 2px; }
.tb-item.run::after { content: ""; position: absolute; bottom: 0; left: 4px; right: 5px; height: 2px; background: #f4d6b4; }
.tb-item.current { background: #3a3a3a; }

.tray { margin-left: auto; display: flex; align-items: center; padding-right: 20px; }
.weather { display: flex; align-items: center; gap: 8px; font-size: 13.500px; color: #eee; margin-right: 11px; letter-spacing: -0.2px; }
.weather svg { width: 24px; height: 24px; }
.tray-icon { width: 24px; display: flex; justify-content: center; }
.tray-icon svg { width: 15px; height: 15px; fill: none; stroke: #ddd; stroke-width: 1.100; }
.tray-clock { margin-left: 6px; width: 58px; text-align: center; font-size: 12px; color: #eee; letter-spacing: -0.2px; white-space: nowrap; }
.tray-note { margin-left: 11px; width: 22px; display: flex; justify-content: center; }
.tray-note svg { width: 16px; height: 16px; }
```
